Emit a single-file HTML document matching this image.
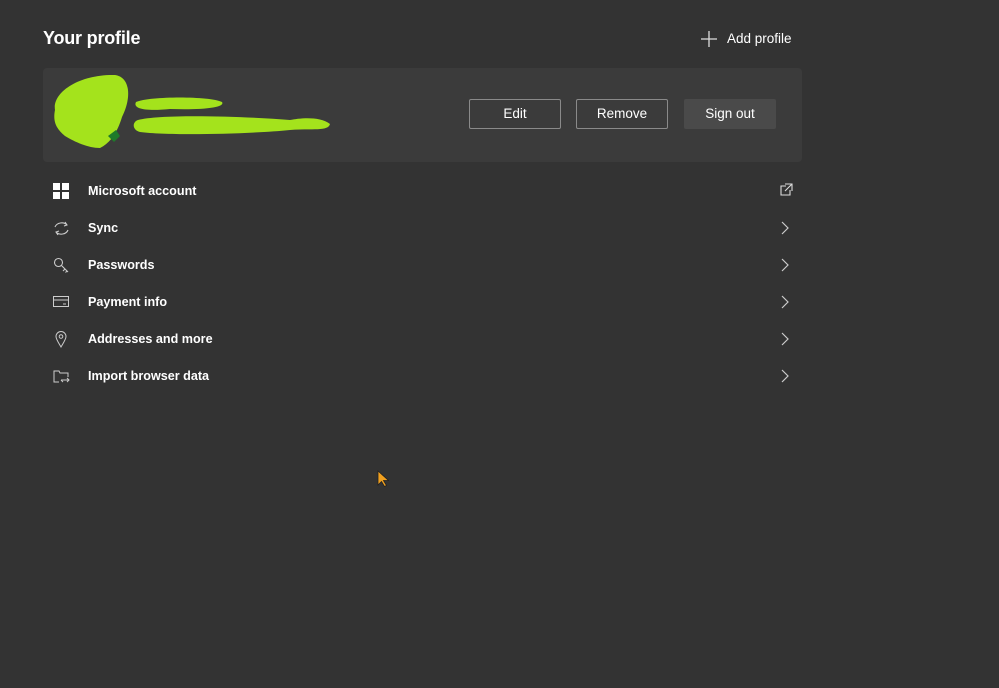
<!DOCTYPE html>
<html><head><meta charset="utf-8"><style>
html,body{margin:0;padding:0;width:999px;height:688px;background:#333333;font-family:"Liberation Sans",sans-serif;color:#fff;overflow:hidden;position:relative}
.abs{position:absolute}
h1{position:absolute;left:43px;top:28px;margin:0;font-size:18px;font-weight:bold;letter-spacing:-0.2px}
.add{left:700px;top:31px;font-size:13.5px}
.card{left:43px;top:68px;width:759px;height:94px;background:#3b3b3b;border-radius:4px}
.btn{position:absolute;top:99px;width:92px;border:1px solid #8a8a8a;border-radius:2px;box-sizing:border-box;height:30px;font-size:13.5px;text-align:center;line-height:28px}
.row{position:absolute;left:88px;font-size:12.6px;font-weight:bold}
.ic{position:absolute;left:53px}
.chev{position:absolute;left:780px}
</style></head><body>
<h1>Your profile</h1>
<div class="abs add"><svg width="18" height="18" style="position:absolute;left:0;top:-1px"><path d="M9 1v16M1 9h16" stroke="#ddd" stroke-width="1.3"/></svg><span style="position:absolute;left:27px;top:0;white-space:nowrap">Add profile</span></div>
<div class="abs card"></div>
<svg class="abs" style="left:50px;top:72px" width="290" height="80">
<path d="M5 38 C2 20 30 2 65 3 C80 5 82 25 72 45 C68 58 62 70 50 76 C38 76 25 70 15 64 C5 56 3 48 5 38Z" fill="#a4e31c"/>
<path d="M58 64 l8 -6 l4 6 l-6 6z" fill="#1e7a2a"/>
<path d="M86 30 C100 24 160 24 172 30 C176 36 150 38 120 37 C100 39 82 38 86 30Z" fill="#a4e31c"/>
<path d="M88 48 C110 42 190 44 240 48 C250 46 270 44 280 52 C278 60 260 56 240 58 C200 62 120 64 90 60 C82 58 82 50 88 48Z" fill="#a4e31c"/>
</svg>
<div class="btn" style="left:469px">Edit</div>
<div class="btn" style="left:576px">Remove</div>
<div class="btn" style="left:684px;border:none;background:#4a4a4a;line-height:30px">Sign out</div>

<svg class="ic" style="top:183px" width="16" height="16"><rect x="0" y="0" width="7" height="7" fill="#fff"/><rect x="9" y="0" width="7" height="7" fill="#fff"/><rect x="0" y="9" width="7" height="7" fill="#fff"/><rect x="9" y="9" width="7" height="7" fill="#fff"/></svg>
<div class="row" style="top:184px">Microsoft account</div>
<svg class="chev" style="top:183px" width="13" height="13"><path d="M5 1h7v7M12 1L5 8M10 7v5H1V3h5" stroke="#ddd" fill="none" stroke-width="1.1"/></svg>

<svg class="ic" style="top:220px" width="17" height="17"><path d="M2 7A7 6 0 0 1 14 5M15 10A7 6 0 0 1 3 12M12 2l2 3-3 1M5 15l-2-3 3-1" stroke="#ccc" fill="none" stroke-width="1.1"/></svg>
<div class="row" style="top:221px">Sync</div>
<svg class="chev" style="top:221px" width="10" height="14"><path d="M2 1l6 6-6 6" stroke="#ccc" fill="none" stroke-width="1.2"/></svg>

<svg class="ic" style="top:257px" width="17" height="17"><circle cx="5.5" cy="5.5" r="4" stroke="#ccc" fill="none" stroke-width="1.1"/><path d="M8.5 8.5L15 15M12 12l-2 2M14 14l-1.5 1.5" stroke="#ccc" fill="none" stroke-width="1.1"/></svg>
<div class="row" style="top:258px">Passwords</div>
<svg class="chev" style="top:258px" width="10" height="14"><path d="M2 1l6 6-6 6" stroke="#ccc" fill="none" stroke-width="1.2"/></svg>

<svg class="ic" style="top:296px" width="16" height="12"><rect x="0.5" y="0.5" width="15" height="10" stroke="#ccc" fill="none"/><path d="M0.5 4h15" stroke="#ccc"/><path d="M10 8h3" stroke="#ccc"/></svg>
<div class="row" style="top:295px">Payment info</div>
<svg class="chev" style="top:295px" width="10" height="14"><path d="M2 1l6 6-6 6" stroke="#ccc" fill="none" stroke-width="1.2"/></svg>

<svg class="ic" style="top:331px;left:55px" width="12" height="17"><path d="M6 16C3 11 1 8 1 5.5A5 5 0 0 1 11 5.5C11 8 9 11 6 16Z" stroke="#ccc" fill="none"/><circle cx="6" cy="5.5" r="1.8" stroke="#ccc" fill="none"/></svg>
<div class="row" style="top:332px">Addresses and more</div>
<svg class="chev" style="top:332px" width="10" height="14"><path d="M2 1l6 6-6 6" stroke="#ccc" fill="none" stroke-width="1.2"/></svg>

<svg class="ic" style="top:369px" width="17" height="15"><path d="M6 13H1V2h5l1 2h8v4" stroke="#ccc" fill="none"/><path d="M8 11h8M14 9l2 2-2 2M10 13l-2-2" stroke="#ccc" fill="none"/></svg>
<div class="row" style="top:369px">Import browser data</div>
<svg class="chev" style="top:369px" width="10" height="14"><path d="M2 1l6 6-6 6" stroke="#ccc" fill="none" stroke-width="1.2"/></svg>

<svg class="abs" style="left:377px;top:470px" width="12" height="18"><path d="M1 1v14l3.5-3.5 3 5 2-1-3-5h5z" fill="#f0a020" stroke="#222" stroke-width="0.8"/></svg>
</body></html>
